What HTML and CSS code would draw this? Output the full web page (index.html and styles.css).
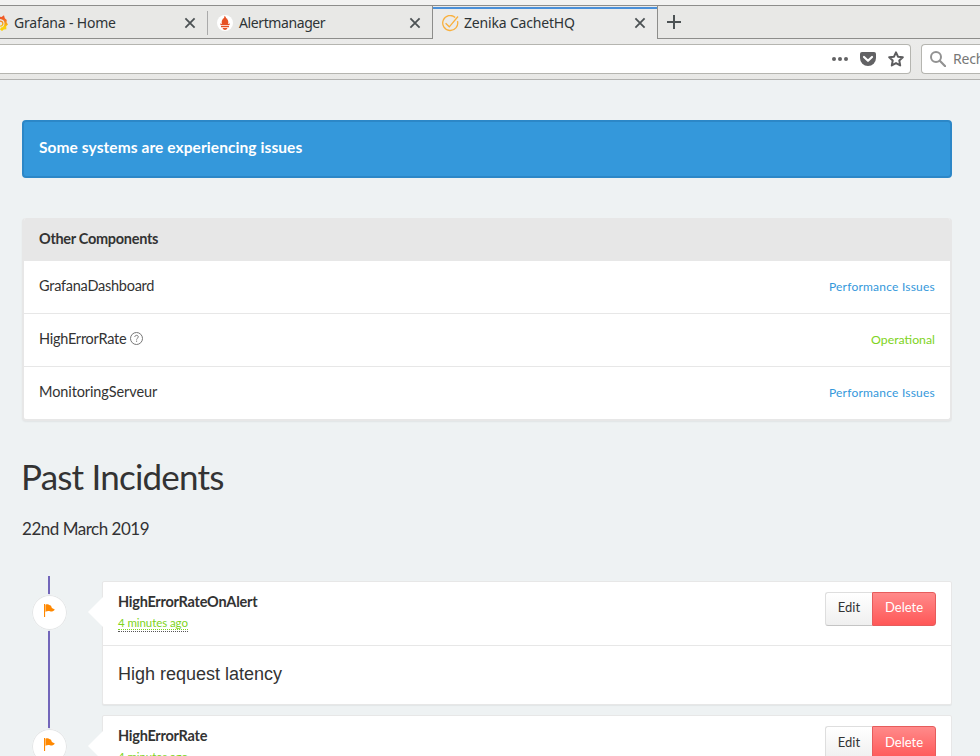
FILE: index.html
```html
<!DOCTYPE html>
<html lang="en">
<head>
<meta charset="utf-8">
<title>Zenika CachetHQ</title>
<link rel="stylesheet" href="styles.css">
</head>
<body>
<svg class="defs" width="0" height="0">
  <symbol id="close" viewBox="0 0 12 12"><path d="M1.4 1.4l9.2 9.2M10.6 1.4l-9.2 9.2" fill="none" stroke="#4c5254" stroke-width="1.8"/></symbol>
  <symbol id="flag" viewBox="0 0 11 13"><path d="M0 0h1.1v13H0zM1.500.8C3 .1 4.500.3 5.400 1c.6.500 1 .5 1.500.5l1 2.500L10.800 5.400C9.500 7.500 7.300 7.700 6 7.200 4.500 6.600 2.900 6.900 1.500 7.700z" fill="#ff8800"/></symbol>
</svg>
<header class="browser">
  <div class="tabs">
    <div class="tab tab-first">
      <svg class="favicon grafana" width="16" height="16" viewBox="0 0 16 16"><defs><linearGradient id="g" x1="0" y1="0" x2="0" y2="16" gradientUnits="userSpaceOnUse"><stop offset=".2" stop-color="#f05a28"/><stop offset=".75" stop-color="#fbd00a"/></linearGradient></defs><path d="M7 1.500l2.500.5L12 .3l.8 3 2 1.700-.3 2.200 1.500 2.300-1.800 1.700.2 3-2.600.2L10 16l-2-1.400 1-2.200c2.200-.2 3.500-1.600 3.500-4C12.500 5.300 10.500 4 7 4z" fill="url(#g)"/><path d="M6.500 6.300c3.300-.8 4.800 1.200 4.200 3.200-.4 1.300-1.700 1.800-2.700 1.500" fill="none" stroke="url(#g)" stroke-width="1.300"/></svg>
      <span class="tab-title">Grafana - Home</span>
      <svg class="close" width="12" height="12"><use href="#close"/></svg>
    </div>
    <div class="tab tab-second">
      <svg class="favicon" width="16" height="16" viewBox="0 0 16 16"><circle cx="8" cy="8" r="8" fill="#fff"/><path d="M7.600.8c1.200 1 1.500 2 1.500 2.900l.9-.6c-.1 1.400 1.300 2.300 1.300 3.800 0 1-.1 1.400-.4 2l2.100-.5c-.1.800-.5 1.400-1 1.900H4c-.5-.5-.9-1.100-1-1.900l2.100.5c-.3-.6-.4-1-.4-2 0-1.500 1.300-2.400 1.400-3.800l.8.600C7.100 3 7.200 2 7.600.8zM4 10.900h8v1.400H4zM5.500 12.900h5c-.5 1.300-1.500 2-2.500 2s-2-.7-2.500-2z" fill="#e75225"/></svg>
      <span class="tab-title t-alert">Alertmanager</span>
      <svg class="close" width="12" height="12"><use href="#close"/></svg>
    </div>
    <div class="tab tab-active">
      <svg class="favicon" width="17" height="17" viewBox="0 0 17 17"><path d="M13.200 2.400A7.500 7.500 0 1 0 15.500 6.200M3.600 8.200l3.700 3.600L16 1.500" fill="none" stroke="#f9b03d" stroke-width="1.300"/></svg>
      <span class="tab-title">Zenika CachetHQ</span>
      <svg class="close" width="12" height="12"><use href="#close"/></svg>
    </div>
    <div class="tab-rest"><svg width="14" height="14" viewBox="0 0 14 14"><path d="M7 0v14M0 7h14" stroke="#4c5254" stroke-width="2"/></svg></div>
  </div>
  <div class="toolbar">
    <div class="url">
      <svg width="16" height="4" viewBox="0 0 16 4"><g fill="#626264"><circle cx="2" cy="2" r="2"/><circle cx="8" cy="2" r="2"/><circle cx="14" cy="2" r="2"/></g></svg>
      <svg width="16" height="14" viewBox="0 0 16 14"><path d="M2 0h12a2 2 0 0 1 2 2v4a8 8 0 0 1-16 0V2a2 2 0 0 1 2-2z" fill="#626264"/><path d="M4 5l4 3.800L12 5" fill="none" stroke="#fff" stroke-width="2.200" stroke-linecap="round" stroke-linejoin="round"/></svg>
      <svg width="16" height="16" viewBox="0 0 16 16"><path d="M8 1.400l2 4.300 4.800.6-3.500 3.300.9 4.800L8 12.100l-4.200 2.300.9-4.800L1.200 6.300 6 5.700z" fill="none" stroke="#5c5c5e" stroke-width="2" stroke-linejoin="round"/></svg>
    </div>
    <div class="search">
      <svg width="16" height="16" viewBox="0 0 16 16"><circle cx="6" cy="6" r="5" fill="none" stroke="#929292" stroke-width="2"/><path d="M9.800 9.800l5.400 5.400" stroke="#929292" stroke-width="2.200" stroke-linecap="round"/></svg>
      <span>Rech</span>
    </div>
  </div>
</header>
<main class="page">
  <div class="alert">Some systems are experiencing issues</div>
  <section class="components">
    <h2 class="group">Other Components</h2>
    <div class="row"><span>GrafanaDashboard</span><small class="perf">Performance Issues</small></div>
    <div class="row"><span>HighErrorRate</span><svg class="help" width="13" height="13" viewBox="0 0 13 13"><circle cx="6.500" cy="6.500" r="6" fill="none" stroke="#777"/><path d="M4.800 5c0-2.200 3.500-2.200 3.500-.1 0 1.300-1.700 1.300-1.700 2.700M6.600 8.600v1.200" fill="none" stroke="#777"/></svg><small class="ok">Operational</small></div>
    <div class="row"><span class="serveur">MonitoringServeur</span><small class="perf">Performance Issues</small></div>
  </section>
  <h1 class="past">Past Incidents</h1>
  <h3 class="date">22nd March 2019</h3>
  <div class="timeline">
    <div class="moment">
      <div class="rail"><div class="dot"><svg width="11" height="13"><use href="#flag"/></svg></div></div>
      <article class="incident">
        <div class="incident-head">
          <div class="info"><strong>HighErrorRateOnAlert</strong><a class="ago"><abbr>4 minutes ago</abbr></a></div>
          <div class="buttons"><button class="edit">Edit</button><button class="delete">Delete</button></div>
        </div>
        <p class="message">High request latency</p>
      </article>
    </div>
    <div class="moment">
      <div class="rail"><div class="dot"><svg width="11" height="13"><use href="#flag"/></svg></div></div>
      <article class="incident">
        <div class="incident-head">
          <div class="info"><strong>HighErrorRate</strong><a class="ago"><abbr>4 minutes ago</abbr></a></div>
          <div class="buttons lower"><button class="edit">Edit</button><button class="delete">Delete</button></div>
        </div>
      </article>
    </div>
  </div>
</main>
</body>
</html>
```

FILE: styles.css
```css
* { box-sizing: border-box; }
html, body { height: 756px; overflow: hidden; }
body { display: flex; flex-direction: column; margin: 0; background: #eef2f3; color: #333; font-family: Lato, "Liberation Sans", sans-serif; font-size: 14.5px; }
svg { display: block; flex: none; }
.defs { position: absolute; }
h1, h2, h3, p { margin: 0; font-weight: 400; }
span, small, strong { white-space: nowrap; }

.browser { flex: none; height: 80px; background: #e9e9e7; border-bottom: 1px solid #b2b2b0; font-family: "Noto Sans", "Open Sans", sans-serif; color: #2e3436; overflow: hidden; }
.tabs { display: flex; height: 39px; padding-top: 5px; background: #f2f2f1; }
.tab, .tab-rest { display: flex; align-items: center; height: 34px; border-top: 1px solid #8d8d8b; border-bottom: 1px solid #8d8d8b; background: #e8e8e6; }
.tab-title { flex: 1; margin-left: 6px; padding-top: 2px; font-size: 14px; line-height: 20px; letter-spacing: -.18px; }
.t-alert { letter-spacing: -.4px; }
.close { margin-top: 1px; }
.tab-first { width: 207px; padding-right: 11px; }
.grafana { margin-left: -8px; margin-top: 1px; }
.tab-second { width: 225px; padding: 0 11px 0 10px; background: linear-gradient(#aaa, #aaa) 0 5px / 1px 24px no-repeat #e8e8e6; }
.tab-second .favicon { margin-top: 1px; }
.tab-active { width: 226px; padding: 0 11px 0 9px; border: 1px solid #8d8d8b; border-bottom: 0; background: linear-gradient(#4a90d9, #4a90d9) 0 1px / 100% 2px no-repeat #ebebea; }
.tab-active .tab-title { margin-left: 5px; padding-top: 0; }
.tab-active .favicon { margin-top: 1px; }
.tab-active .close { margin-top: 0; }
.tab-rest { flex: 1; padding-left: 9px; }
.toolbar { display: flex; gap: 10px; height: 41px; padding-top: 5px; background: linear-gradient(#ebebea, #e8e8e6); }
.url, .search { display: flex; align-items: center; height: 30px; background: #fff; border: 1px solid #b5b5b0; }
.url { flex: none; width: 911px; justify-content: flex-end; gap: 12px; padding-right: 6px; border-left: 0; border-radius: 0 4px 4px 0; }
.search { flex: 1; overflow: hidden; border-right: 0; border-radius: 4px 0 0 4px; padding-left: 8px; gap: 7px; font-size: 14px; letter-spacing: -.2px; color: #777; }
.search span { line-height: 20px; padding-bottom: 1px; }

.page { flex: 1; min-height: 0; overflow: hidden; width: 952px; padding: 40px 0 0 22px; }
.alert { width: 930px; height: 58px; padding: 0 15px; border: 2px solid #2c87c7; border-radius: 4px; background: #3498db; color: #fff; font-size: 15.5px; font-weight: 700; letter-spacing: .08px; line-height: 51px; }
.components { margin-top: 40px; border: 2px solid #e7e7e7; border-top: 0; border-radius: 4px; background: #fff; box-shadow: 0 1px 2px rgba(0,0,0,.06); overflow: hidden; }
.group { height: 43px; padding-left: 15px; background: #e7e7e7; font-size: 14.5px; font-weight: 700; letter-spacing: -.3px; line-height: 41px; }
.row { display: flex; align-items: center; height: 53px; padding: 0 15px 4px; border-bottom: 1px solid #e7e7e7; }
.row span { letter-spacing: -.25px; }
.row .serveur { letter-spacing: -.1px; }
.row:last-child { height: 52px; padding-bottom: 3px; border-bottom: 0; }
.row small { margin-left: auto; font-size: 12px; padding-top: 2px; }
.help { margin-left: 4px; }
.row .perf { color: #3498db; letter-spacing: .22px; }
.row .ok { color: #7ed321; font-size: 12.3px; padding-top: 3px; }
.past { margin: 33px 0 0 -1px; font-size: 35px; letter-spacing: -.8px; line-height: 44px; }
.date { margin-top: 20px; font-size: 17px; letter-spacing: -.48px; line-height: 22px; }

.timeline { margin-top: 36px; padding-top: 5px; background: linear-gradient(#7266ba, #7266ba) 26px 0 / 2px 100% no-repeat; }
.moment { display: flex; height: 134px; }
.rail { width: 80px; padding: 13px 0 0 9px; }
.dot { display: flex; align-items: center; justify-content: center; width: 37px; height: 37px; border: 1px solid #eef2f3; border-radius: 50%; background: #fff; box-shadow: 0 0 0 1px #e4e6e7 inset; padding: 0 0 5px; }
.incident { position: relative; width: 850px; height: 124px; border: 1px solid #e7e7e7; border-radius: 2px; background: #fff; box-shadow: 0 1px 1px rgba(0,0,0,.05); }
.incident::before { content: ""; position: absolute; left: -15px; top: 15px; border: 15px solid transparent; border-left: 0; border-right-color: #fff; }
.incident-head { display: flex; justify-content: space-between; height: 64px; padding: 10px 15px 0; border-bottom: 1px solid #e7e7e7; }
.info strong { display: block; font-size: 14.5px; letter-spacing: -.25px; line-height: 20px; }
.ago { display: inline-block; margin-top: 3px; height: 17px; border-bottom: 1px dotted #555; color: #7ed321; font-size: 11.5px; letter-spacing: -.08px; line-height: 15px; }
.ago abbr { display: block; height: 15px; border-bottom: 1px dotted #7ed321; white-space: nowrap; }
.buttons { display: flex; height: 34px; }
button { height: 34px; padding: 0 0 4px; border: 1px solid #dedede; font: 13px/18px Lato, sans-serif; }
.lower button { padding-bottom: 2px; }
.edit { width: 47px; border-right: 0; border-bottom-color: #c4c4c4; border-radius: 3px 0 0 3px; background: linear-gradient(#fff, #efefef); color: #333; }
.delete { width: 64px; border-color: #e65c5c; border-radius: 0 3px 3px 0; background: linear-gradient(#ff8a8a, #ff5757); color: #fff; }
.message { padding-left: 15px; font: 18px/56px "Liberation Sans", sans-serif; }
```
